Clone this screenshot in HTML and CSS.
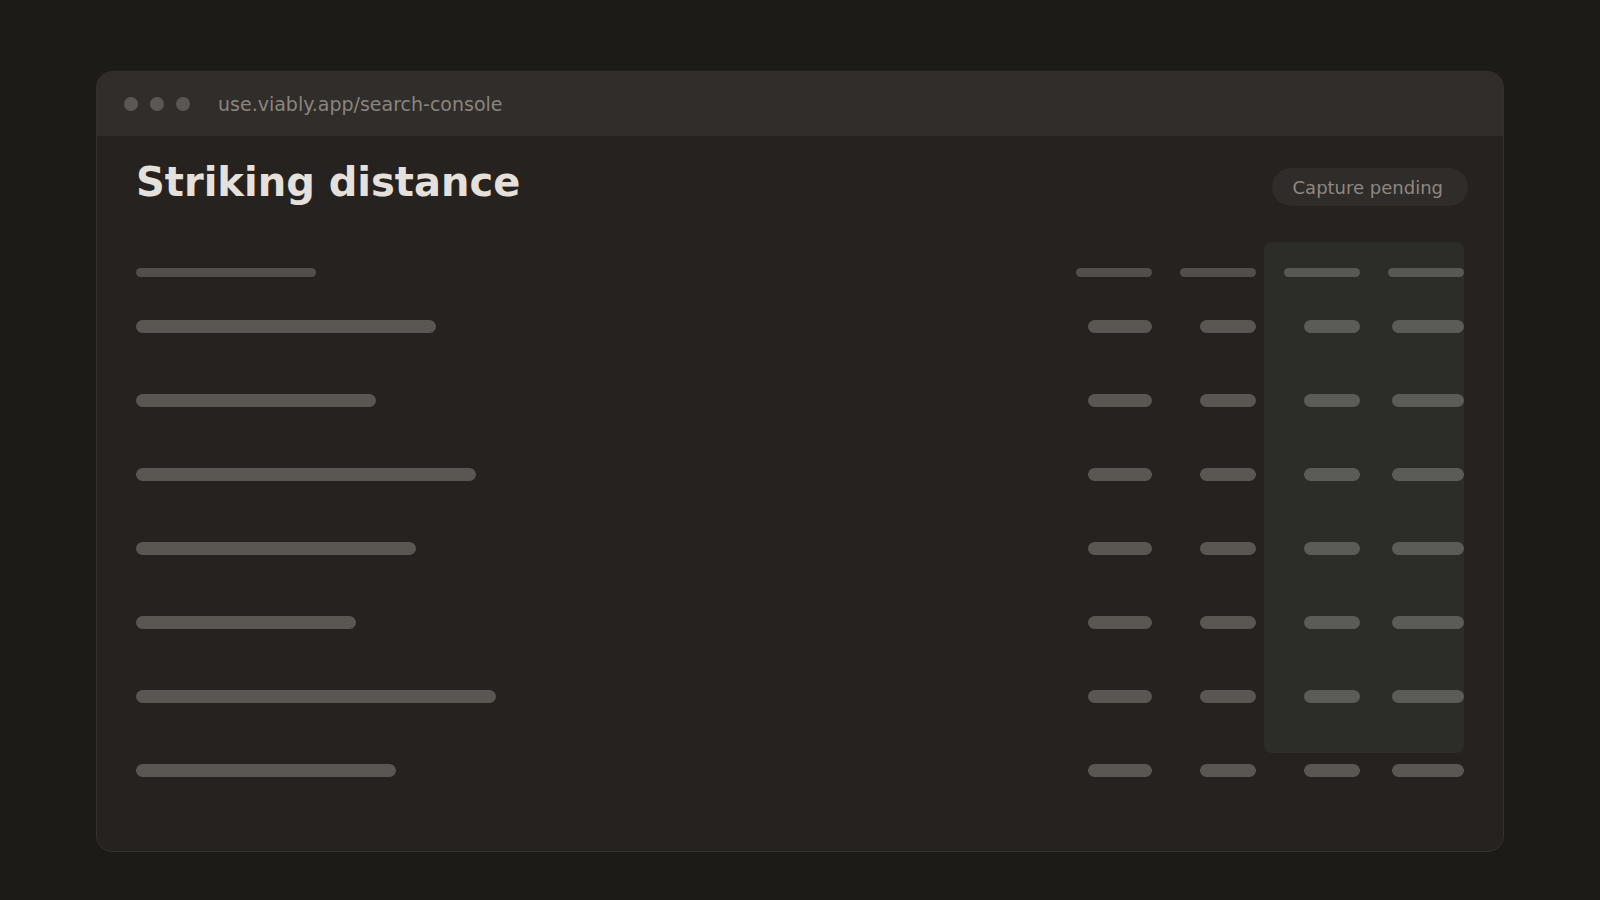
FILE: index.html
```html
<!DOCTYPE html>
<html lang="en">
<head>
    <meta charset="UTF-8">
    <meta name="viewport" content="width=device-width, initial-scale=1.0">
    <title>Striking distance</title>
    <link rel="stylesheet" href="styles.css">
</head>
<body>
    <div class="window">
        <div class="titlebar">
            <span class="dot"></span>
            <span class="dot"></span>
            <span class="dot"></span>
            <span class="url">use.viably.app/search-console</span>
        </div>
        <div class="content">
            <div class="page-head">
                <h1>Striking distance</h1>
                <div class="badge">Capture pending</div>
            </div>
            <div class="table">
                <div class="spotlight"></div>
                <div class="row head">
                    <span class="bar" style="width: 180px"></span>
                    <span class="bar num"></span>
                    <span class="bar num"></span>
                    <span class="bar num hl"></span>
                    <span class="bar num hl"></span>
                </div>
                <div class="row">
                    <span class="bar" style="width: 300px"></span>
                    <span class="bar c1"></span>
                    <span class="bar c2"></span>
                    <span class="bar c3 hl"></span>
                    <span class="bar c4 hl"></span>
                </div>
                <div class="row">
                    <span class="bar" style="width: 240px"></span>
                    <span class="bar c1"></span>
                    <span class="bar c2"></span>
                    <span class="bar c3 hl"></span>
                    <span class="bar c4 hl"></span>
                </div>
                <div class="row">
                    <span class="bar" style="width: 340px"></span>
                    <span class="bar c1"></span>
                    <span class="bar c2"></span>
                    <span class="bar c3 hl"></span>
                    <span class="bar c4 hl"></span>
                </div>
                <div class="row">
                    <span class="bar" style="width: 280px"></span>
                    <span class="bar c1"></span>
                    <span class="bar c2"></span>
                    <span class="bar c3 hl"></span>
                    <span class="bar c4 hl"></span>
                </div>
                <div class="row">
                    <span class="bar" style="width: 220px"></span>
                    <span class="bar c1"></span>
                    <span class="bar c2"></span>
                    <span class="bar c3 hl"></span>
                    <span class="bar c4 hl"></span>
                </div>
                <div class="row">
                    <span class="bar" style="width: 360px"></span>
                    <span class="bar c1"></span>
                    <span class="bar c2"></span>
                    <span class="bar c3 hl"></span>
                    <span class="bar c4 hl"></span>
                </div>
                <div class="row">
                    <span class="bar" style="width: 260px"></span>
                    <span class="bar c1"></span>
                    <span class="bar c2"></span>
                    <span class="bar c3"></span>
                    <span class="bar c4"></span>
                </div>
            </div>
        </div>
    </div>
</body>
</html>
```

FILE: styles.css
```css
html, body {
    margin: 0;
    padding: 0;
    height: 100%;
}
body {
    background-color: #1c1b18;
    padding: 71px 96px 0 96px;
    box-sizing: border-box;
    font-family: "DejaVu Sans", Verdana, sans-serif;
}
.window {
    height: 781px;
    box-sizing: border-box;
    border: 1px solid #34302c;
    border-radius: 16px;
    background-color: #26221f;
    overflow: hidden;
}
/* barre du navigateur */
.titlebar {
    height: 64px;
    display: flex;
    align-items: center;
    padding-left: 27px;
    background-color: #312d2a;
}
.dot {
    width: 14px;
    height: 14px;
    border-radius: 50%;
    background-color: #5b5752;
    margin-right: 12px;
}
.url {
    margin-left: 16px;
    font-size: 19px;
    color: #8a857f;
}
.content {
    padding: 22px 39px 0 39px;
}
.page-head {
    display: flex;
    justify-content: space-between;
    align-items: flex-start;
}
h1 {
    margin: 0;
    font-size: 40px;
    line-height: 48px;
    font-weight: 700;
    color: #e5e1da;
}
.badge {
    margin-top: 10px;
    margin-right: -4px;
    padding: 9px 25px 7px 21px;
    line-height: 22px;
    font-size: 18px;
    border-radius: 19px;
    background-color: #2f2c29;
    color: #8d8882;
}
/* tableau squelette */
.table {
    position: relative;
    margin-top: 35px;
}
.spotlight {
    position: absolute;
    top: 1px;
    right: 0;
    width: 200px;
    height: 511px;
    border-radius: 8px;
    background-color: #2c2c28;
}
.row {
    position: relative;
    display: grid;
    grid-template-columns: 1fr 96px 96px 96px 96px;
    column-gap: 8px;
    align-items: center;
    height: 74px;
}
.row.head {
    height: 9px;
    padding: 27px 0 12px 0;
}
.bar {
    display: block;
    height: 13px;
    border-radius: 7px;
    background-color: #5a5652;
}
.head .bar {
    height: 9px;
    background-color: #524e4a;
}
.num { width: 76px; justify-self: end; }
.c1 { width: 64px; justify-self: end; }
.c2 { width: 56px; justify-self: end; }
.c3 { width: 56px; justify-self: end; }
.c4 { width: 72px; justify-self: end; }
.bar.hl {
    background-color: #5b5c57;
}
.head .bar.hl {
    background-color: #575853;
}
```
